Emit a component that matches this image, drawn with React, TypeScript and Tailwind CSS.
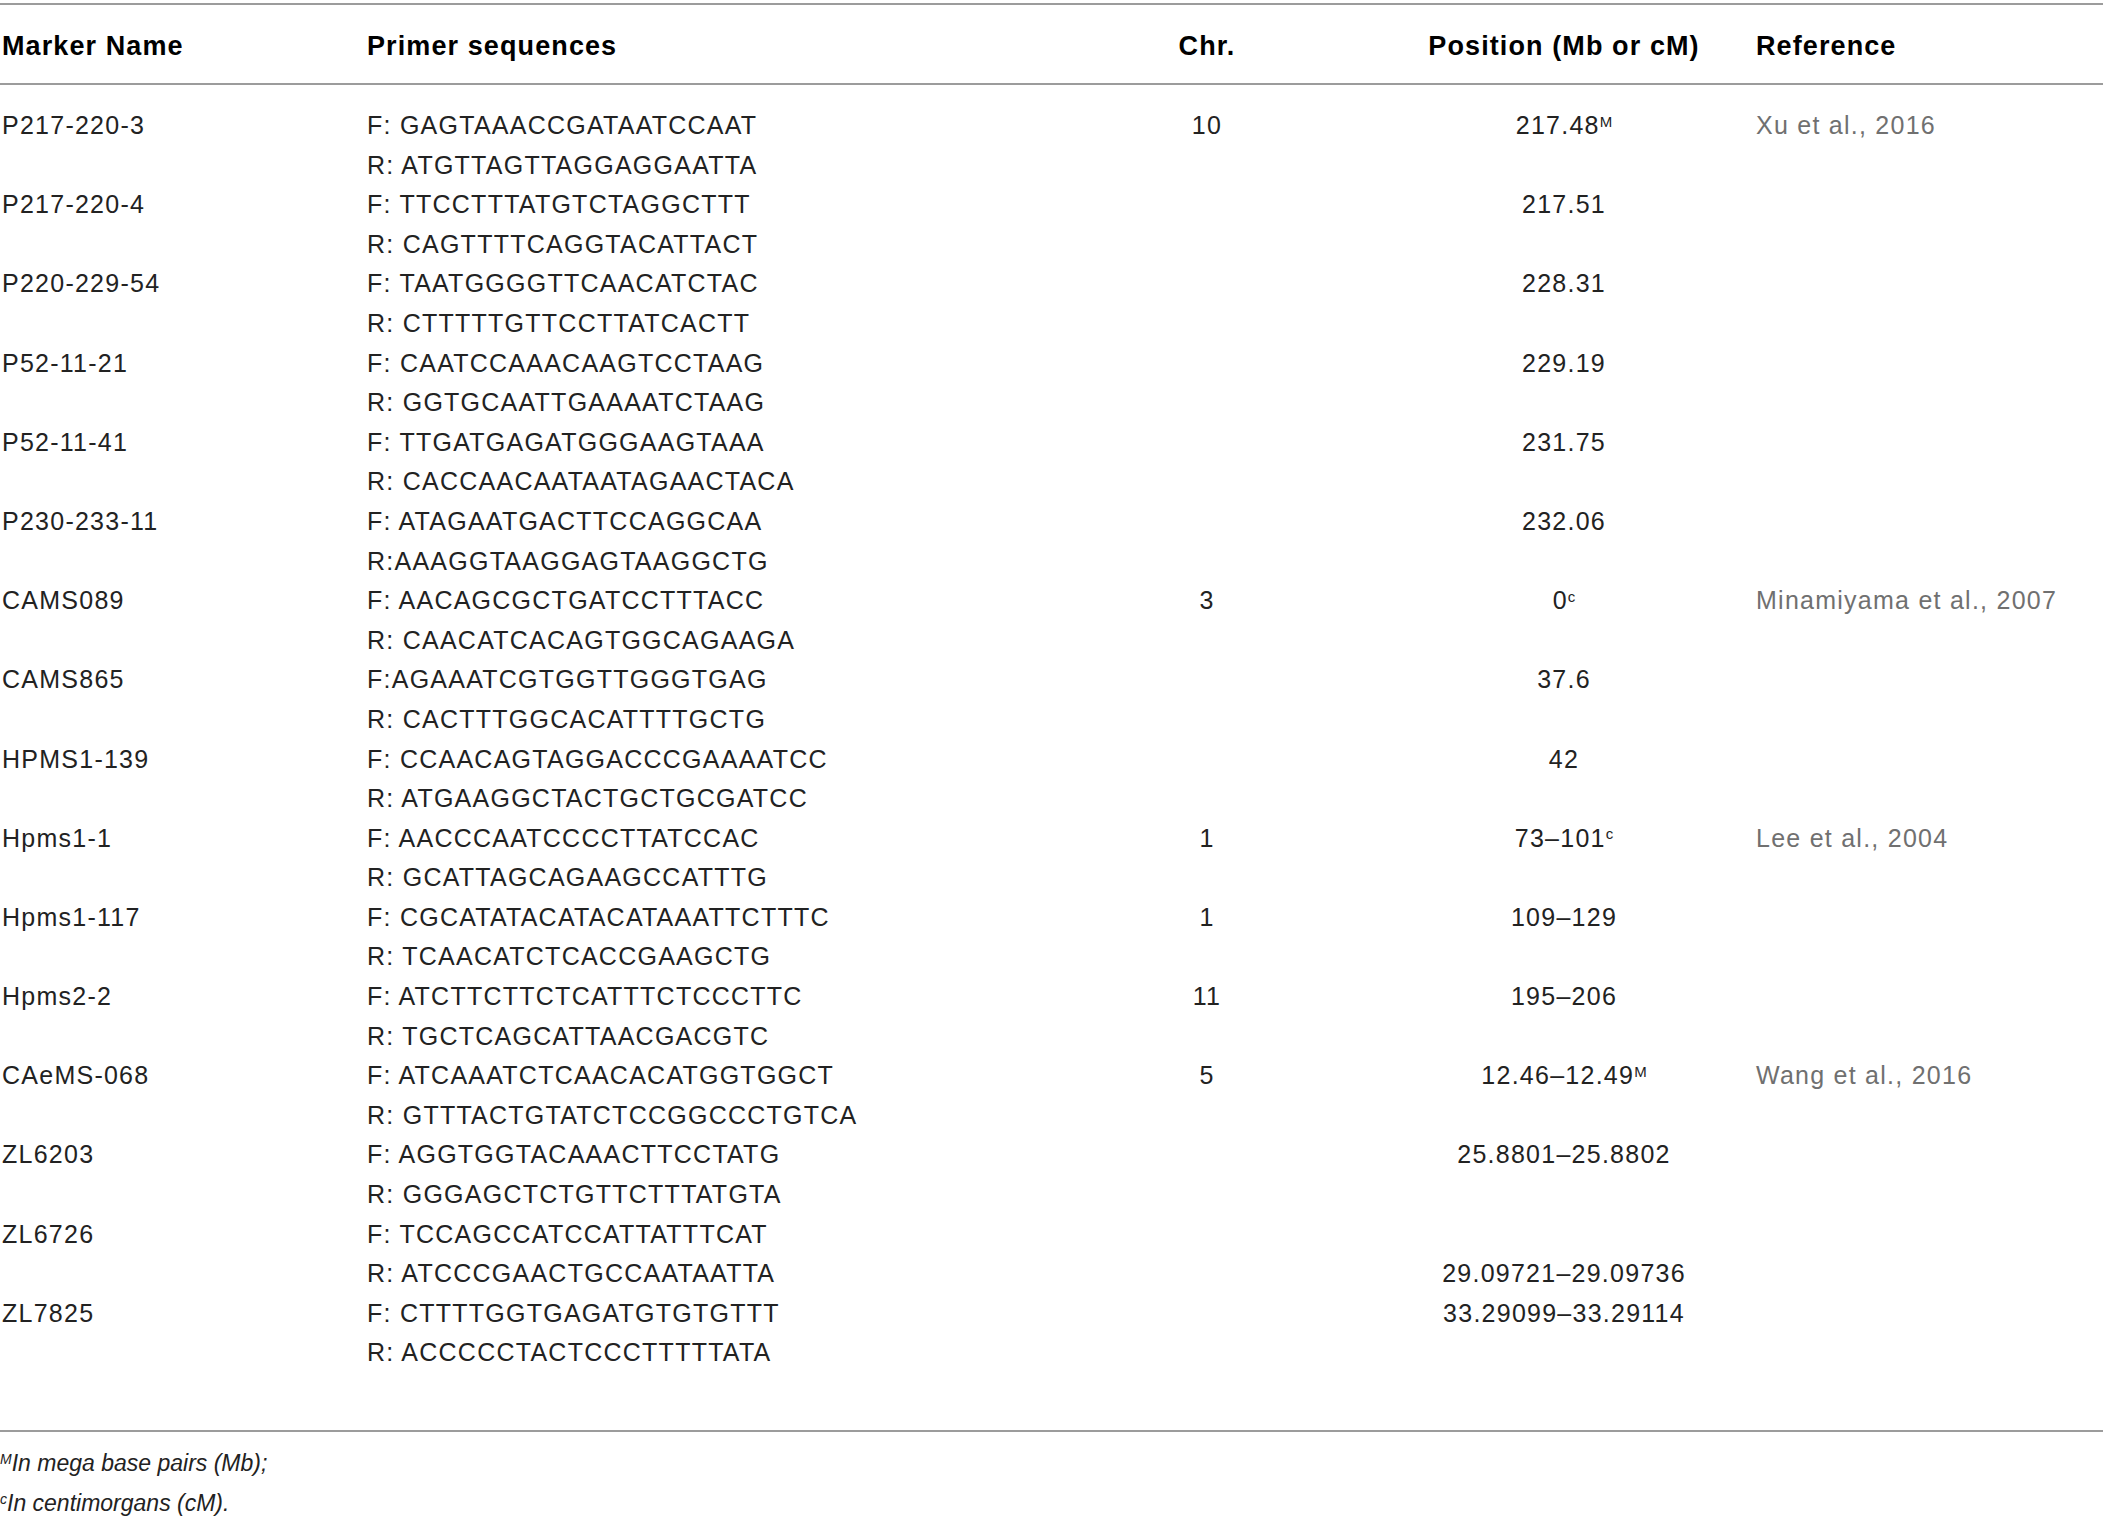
const rows: {
  name: string;
  f: string;
  r: string;
  chr?: string;
  pos?: string;
  sup?: string;
  posLine?: "f" | "r";
  ref?: string;
}[] = [
  { name: "P217-220-3", f: "F: GAGTAAACCGATAATCCAAT", r: "R: ATGTTAGTTAGGAGGAATTA", chr: "10", pos: "217.48", sup: "M", ref: "Xu et al., 2016" },
  { name: "P217-220-4", f: "F: TTCCTTTATGTCTAGGCTTT", r: "R: CAGTTTTCAGGTACATTACT", pos: "217.51" },
  { name: "P220-229-54", f: "F: TAATGGGGTTCAACATCTAC", r: "R: CTTTTTGTTCCTTATCACTT", pos: "228.31" },
  { name: "P52-11-21", f: "F: CAATCCAAACAAGTCCTAAG", r: "R: GGTGCAATTGAAAATCTAAG", pos: "229.19" },
  { name: "P52-11-41", f: "F: TTGATGAGATGGGAAGTAAA", r: "R: CACCAACAATAATAGAACTACA", pos: "231.75" },
  { name: "P230-233-11", f: "F: ATAGAATGACTTCCAGGCAA", r: "R:AAAGGTAAGGAGTAAGGCTG", pos: "232.06" },
  { name: "CAMS089", f: "F: AACAGCGCTGATCCTTTACC", r: "R: CAACATCACAGTGGCAGAAGA", chr: "3", pos: "0", sup: "c", ref: "Minamiyama et al., 2007" },
  { name: "CAMS865", f: "F:AGAAATCGTGGTTGGGTGAG", r: "R: CACTTTGGCACATTTTGCTG", pos: "37.6" },
  { name: "HPMS1-139", f: "F: CCAACAGTAGGACCCGAAAATCC", r: "R: ATGAAGGCTACTGCTGCGATCC", pos: "42" },
  { name: "Hpms1-1", f: "F: AACCCAATCCCCTTATCCAC", r: "R: GCATTAGCAGAAGCCATTTG", chr: "1", pos: "73–101", sup: "c", ref: "Lee et al., 2004" },
  { name: "Hpms1-117", f: "F: CGCATATACATACATAAATTCTTTC", r: "R: TCAACATCTCACCGAAGCTG", chr: "1", pos: "109–129" },
  { name: "Hpms2-2", f: "F: ATCTTCTTCTCATTTCTCCCTTC", r: "R: TGCTCAGCATTAACGACGTC", chr: "11", pos: "195–206" },
  { name: "CAeMS-068", f: "F: ATCAAATCTCAACACATGGTGGCT", r: "R: GTTTACTGTATCTCCGGCCCTGTCA", chr: "5", pos: "12.46–12.49", sup: "M", ref: "Wang et al., 2016" },
  { name: "ZL6203", f: "F: AGGTGGTACAAACTTCCTATG", r: "R: GGGAGCTCTGTTCTTTATGTA", pos: "25.8801–25.8802" },
  { name: "ZL6726", f: "F: TCCAGCCATCCATTATTTCAT", r: "R: ATCCCGAACTGCCAATAATTA", pos: "29.09721–29.09736", posLine: "r" },
  { name: "ZL7825", f: "F: CTTTTGGTGAGATGTGTGTTT", r: "R: ACCCCCTACTCCCTTTTTATA", pos: "33.29099–33.29114" },
];

const Line = ({ children }: { children?: React.ReactNode }) => (
  <div className="h-[39.6px] leading-[39.6px] whitespace-nowrap">{children}</div>
);

const grid = "grid grid-cols-[367px_773px_134px_480px_1fr]";

export default function App() {
  return (
    <div className="w-[2103px] h-[1521px] bg-white pt-[3px] font-['Liberation_Sans',Arial,sans-serif] text-[#222]">
      <div className="border-t-2 border-[#9c9c9c]" />
      <div className={`${grid} h-[78px] items-center pt-[5px] text-[27px] font-bold tracking-[1.1px] text-black`}>
        <div className="pl-[2px]">Marker Name</div>
        <div>Primer sequences</div>
        <div className="text-center">Chr.</div>
        <div className="pl-[100px] text-center">Position (Mb or cM)</div>
        <div className="pl-[2px]">Reference</div>
      </div>
      <div className="border-t-2 border-[#9c9c9c]" />
      <div className="pt-[21px] pb-[57px] text-[25px] tracking-[1.25px]">
        {rows.map((r) => {
          const pos = r.pos ? (
            <>
              {r.pos}
              {r.sup && <sup className="text-[15px] tracking-normal">{r.sup}</sup>}
            </>
          ) : null;
          return (
            <div key={r.name} className={grid}>
              <div className="pl-[2px]">
                <Line>{r.name}</Line>
              </div>
              <div>
                <Line>{r.f}</Line>
                <Line>{r.r}</Line>
              </div>
              <div className="text-center">
                <Line>{r.chr}</Line>
              </div>
              <div className="pl-[100px] text-center">
                {r.posLine === "r" ? (
                  <>
                    <Line />
                    <Line>{pos}</Line>
                  </>
                ) : (
                  <Line>{pos}</Line>
                )}
              </div>
              <div className="pl-[2px] text-[#707070]">
                <Line>{r.ref}</Line>
              </div>
            </div>
          );
        })}
      </div>
      <div className="border-t-2 border-[#9c9c9c]" />
      <div className="pt-[12px] text-[23px] italic text-[#222]">
        <Line>
          <sup className="text-[14px]">M</sup>In mega base pairs (Mb);
        </Line>
        <Line>
          <sup className="text-[14px]">c</sup>In centimorgans (cM).
        </Line>
      </div>
    </div>
  );
}
